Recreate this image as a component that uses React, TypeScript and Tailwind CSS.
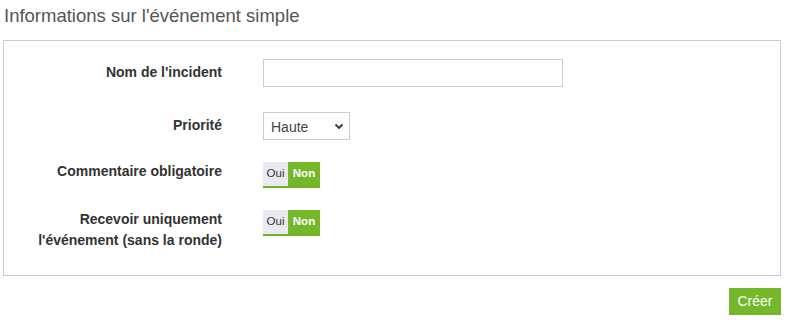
import { useState } from "react";

const Toggle = () => {
  const [on, setOn] = useState(false);
  return (
    <button
      onClick={() => setOn(!on)}
      className="flex h-[26px] w-[57px] border-b-2 border-[#6fb327] text-[11.5px] leading-none"
    >
      <span
        className={`flex h-full w-[25px] items-center justify-center ${on ? "bg-[#74b72a] font-bold text-white" : "bg-[#ebe9f0] text-[#333]"}`}
      >
        Oui
      </span>
      <span
        className={`flex h-full w-[32px] items-center justify-center ${on ? "bg-[#ebe9f0] text-[#333]" : "bg-[#74b72a] font-bold text-white"}`}
      >
        Non
      </span>
    </button>
  );
};

const App = () => {
  const [name, setName] = useState("");
  const [prio, setPrio] = useState("Haute");

  return (
    <div className="h-[320px] w-[785px] bg-white font-['Liberation_Sans',Arial,sans-serif] text-[#333]">
      <h2 className="pl-[4px] pt-[5px] text-[18.5px] leading-[22px] text-[#555]">
        Informations sur l'événement simple
      </h2>

      <div className="ml-[3px] mt-[13px] w-[778px] border border-[#ccc] pb-[24px] pt-[18px]">
        {/* Nom */}
        <div className="flex items-start">
          <label className="w-[218px] pt-[3px] text-right text-[14px] font-bold leading-[21px]">
            Nom de l'incident
          </label>
          <input
            value={name}
            onChange={(e) => setName(e.target.value)}
            className="ml-[41px] h-[28px] w-[300px] border border-[#ccc] px-2 text-[14px] outline-none"
          />
        </div>

        {/* Priorité */}
        <div className="mt-[25px] flex items-start">
          <label className="w-[218px] pt-[3px] text-right text-[14px] font-bold leading-[21px]">
            Priorité
          </label>
          <div className="relative ml-[41px] h-[28px] w-[87px]">
            <select
              value={prio}
              onChange={(e) => setPrio(e.target.value)}
              className="h-full w-full appearance-none rounded-none border border-[#ccc] bg-white pl-[7px] pt-[2px] text-[14px] text-[#444] outline-none"
            >
              <option>Haute</option>
              <option>Moyenne</option>
              <option>Basse</option>
            </select>
            <svg
              className="pointer-events-none absolute right-[6px] top-[11px]"
              width="10"
              height="7"
              viewBox="0 0 10 7"
            >
              <polyline
                points="1.5,1.5 5,5 8.5,1.5"
                fill="none"
                stroke="#333"
                strokeWidth="1.8"
              />
            </svg>
          </div>
        </div>

        {/* Commentaire */}
        <div className="mt-[22px] flex items-start">
          <label className="-mt-[1px] w-[218px] text-right text-[14px] font-bold leading-[21px]">
            Commentaire obligatoire
          </label>
          <div className="ml-[41px]">
            <Toggle />
          </div>
        </div>

        {/* Recevoir */}
        <div className="mt-[22px] flex items-start">
          <label className="-mt-[1px] w-[218px] text-right text-[14px] font-bold leading-[21px]">
            Recevoir uniquement
            <br />
            l'événement (sans la ronde)
          </label>
          <div className="ml-[41px]">
            <Toggle />
          </div>
        </div>
      </div>

      <div className="mt-[12px] flex w-[781px] justify-end">
        <button className="h-[27px] w-[52px] bg-[#74b72a] text-[14px] text-white">
          Créer
        </button>
      </div>
    </div>
  );
};

export default App;
